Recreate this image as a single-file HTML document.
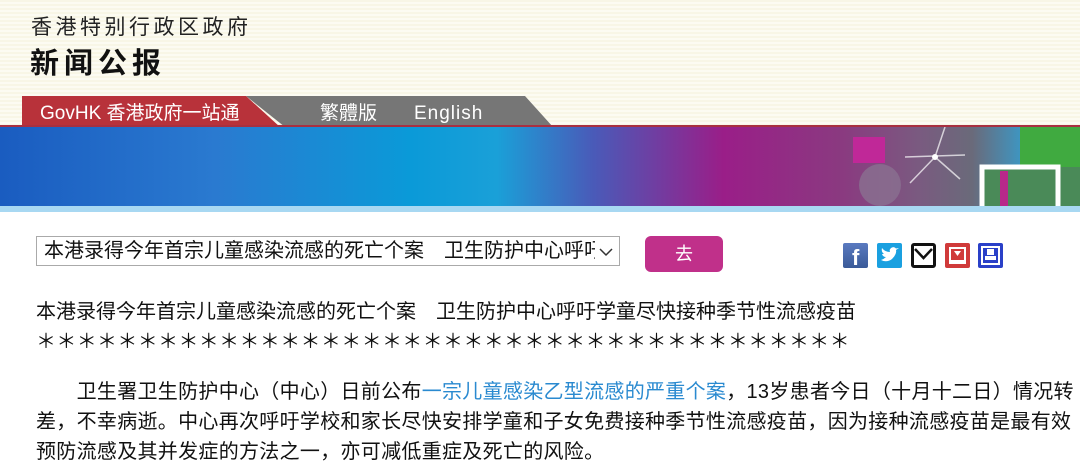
<!DOCTYPE html>
<html><head><meta charset="utf-8"><style>
*{margin:0;padding:0;box-sizing:border-box}
body{width:1080px;height:474px;overflow:hidden;background:#fff;font-family:"Liberation Sans","Noto Sans CJK SC",sans-serif;position:relative}
.hdr{position:absolute;left:0;top:0;width:1080px;height:127px;background:repeating-linear-gradient(#f8f6e6 0 2px,#fcfbf2 2px 4px)}
.t1{position:absolute;left:31px;top:11px;font-size:21px;letter-spacing:3.5px;color:#222}
.t2{position:absolute;left:30px;top:40px;font-size:29px;font-weight:bold;letter-spacing:5px;color:#111}
.banner{position:absolute;left:0;top:127px;width:1080px;height:80px;background:linear-gradient(90deg,#1a5cc0 0%,#2a7ad0 20%,#0a9ad8 38%,#1aa0d8 46%,#4a5ab8 55%,#9a1e88 67%,#8a3a80 78%,#7a5a80 85%,#6a6a7a 90%,#3a9ac8 95%,#3aa048 100%)}
.line{position:absolute;left:0;top:206px;width:1080px;height:6px;background:#a8d8f2}
.line2{position:absolute;left:0;top:125px;width:1080px;height:2px;background:#a83040}
.sel{position:absolute;left:36px;top:236px;width:584px;height:30px;border:1px solid #aaa;font-size:20px;line-height:28px;padding-left:7px;color:#111;white-space:nowrap;overflow:hidden}
.btn{position:absolute;left:645px;top:236px;width:78px;height:36px;border-radius:6px;background:#c0308a;color:#fff;font-size:18px;text-align:center;line-height:36px}
.ic{position:absolute;top:243px;width:25px;height:25px;border-radius:2px}
.txt{position:absolute;left:36px;font-size:20px;line-height:30px;color:#111;white-space:nowrap}
a{color:#2a8ad0;text-decoration:none}
</style></head><body>
<div class="hdr"></div>
<div class="t1">香港特别行政区政府</div>
<div class="t2">新闻公报</div>
<svg style="position:absolute;left:0;top:96px" width="1080" height="31">
<polygon points="246,0 525,0 553,31 285,31" fill="#767676"/>
<polygon points="22,0 246,0 280,31 22,31" fill="#b8323a"/>
<text x="40" y="23" font-size="19" fill="#fff" font-family="Liberation Sans,Noto Sans CJK SC,sans-serif">GovHK 香港政府一站通</text>
<text x="320" y="23" font-size="19" fill="#fff" font-family="Noto Sans CJK TC,sans-serif">繁體版</text>
<text x="414" y="23" font-size="19" fill="#fff" font-family="Liberation Sans,sans-serif" letter-spacing="1">English</text>
</svg>
<div class="line2"></div>
<div class="banner"></div>
<svg style="position:absolute;left:0;top:127px" width="1080" height="80">
<rect x="853" y="10" width="32" height="26" fill="#c02898"/>
<circle cx="880" cy="58" r="21" fill="#8a7090" opacity=".8"/>
<path d="M935 30 L945 0 M935 30 L960 52 M905 30 L965 28 M935 30 L910 56" stroke="#fff" stroke-width="1.5" opacity=".7"/>
<circle cx="935" cy="30" r="3" fill="#fff"/>
<rect x="980" y="40" width="100" height="40" fill="#4a8a58"/>
<rect x="1020" y="0" width="60" height="40" fill="#40aa40"/>
<path d="M982 80 V40 H1058 V80" stroke="#fff" stroke-width="5" fill="none"/>
<rect x="1000" y="44" width="8" height="36" fill="#b8288a"/>
</svg>
<div class="line"></div>
<div class="sel">本港录得今年首宗儿童感染流感的死亡个案　卫生防护中心呼吁<span style="position:absolute;right:0;top:0;height:28px;background:#fff;padding:0 6px 0 4px">
<svg width="14" height="10"><path d="M1 2 L7 8 L13 2" stroke="#333" stroke-width="1.5" fill="none"/></svg></span></div>
<div class="btn">去</div>
<div class="ic" style="left:843px;background:linear-gradient(#5a7ac0,#3a5a98)"><span style="position:absolute;left:9px;top:2px;color:#fff;font:bold 22px 'Liberation Sans'">f</span></div>
<div class="ic" style="left:877px;background:#1aa0e0"><svg width="25" height="25"><path d="M4 17 Q10 20 15 16 Q20 11 19 7 L22 5 L19 5.5 Q17 3 14 5 Q12 7 13 9 Q8 9 5 5 Q4 9 7 11 L5 11 Q6 14 9 14 Q7 16 4 17Z" fill="#fff"/></svg></div>
<div class="ic" style="left:911px;background:#fff;border:3px solid #111;border-radius:3px"><svg width="19" height="19"><path d="M1 3 L9.5 12 L18 3" stroke="#111" stroke-width="2.5" fill="none"/></svg></div>
<div class="ic" style="left:945px;background:#d03a3a"><svg width="25" height="25"><rect x="4" y="4" width="17" height="17" fill="#fff"/><rect x="6" y="6" width="13" height="11" fill="#d03a3a"/><path d="M9 8 H16 L12.5 13Z" fill="#fff"/></svg></div>
<div class="ic" style="left:978px;background:#2a40c8"><svg width="25" height="25"><rect x="3" y="3" width="19" height="19" fill="#fff"/><rect x="5" y="5" width="15" height="15" fill="#2a40c8"/><rect x="9" y="6" width="7" height="6" fill="#fff"/><rect x="7" y="13" width="11" height="4" fill="#fff"/></svg></div>
<div class="txt" style="top:297px">本港录得今年首宗儿童感染流感的死亡个案　卫生防护中心呼吁学童尽快接种季节性流感疫苗</div>
<div class="txt" style="top:327px;letter-spacing:0.35px">＊＊＊＊＊＊＊＊＊＊＊＊＊＊＊＊＊＊＊＊＊＊＊＊＊＊＊＊＊＊＊＊＊＊＊＊＊＊＊＊</div>
<div class="txt" style="top:377px;letter-spacing:0.3px">　　卫生署卫生防护中心（中心）日前公布<a>一宗儿童感染乙型流感的严重个案</a>，13岁患者今日（十月十二日）情况转</div>
<div class="txt" style="top:407px;letter-spacing:0.3px">差，不幸病逝。中心再次呼吁学校和家长尽快安排学童和子女免费接种季节性流感疫苗，因为接种流感疫苗是最有效</div>
<div class="txt" style="top:437px;letter-spacing:0.3px">预防流感及其并发症的方法之一，亦可减低重症及死亡的风险。</div>
</body></html>
